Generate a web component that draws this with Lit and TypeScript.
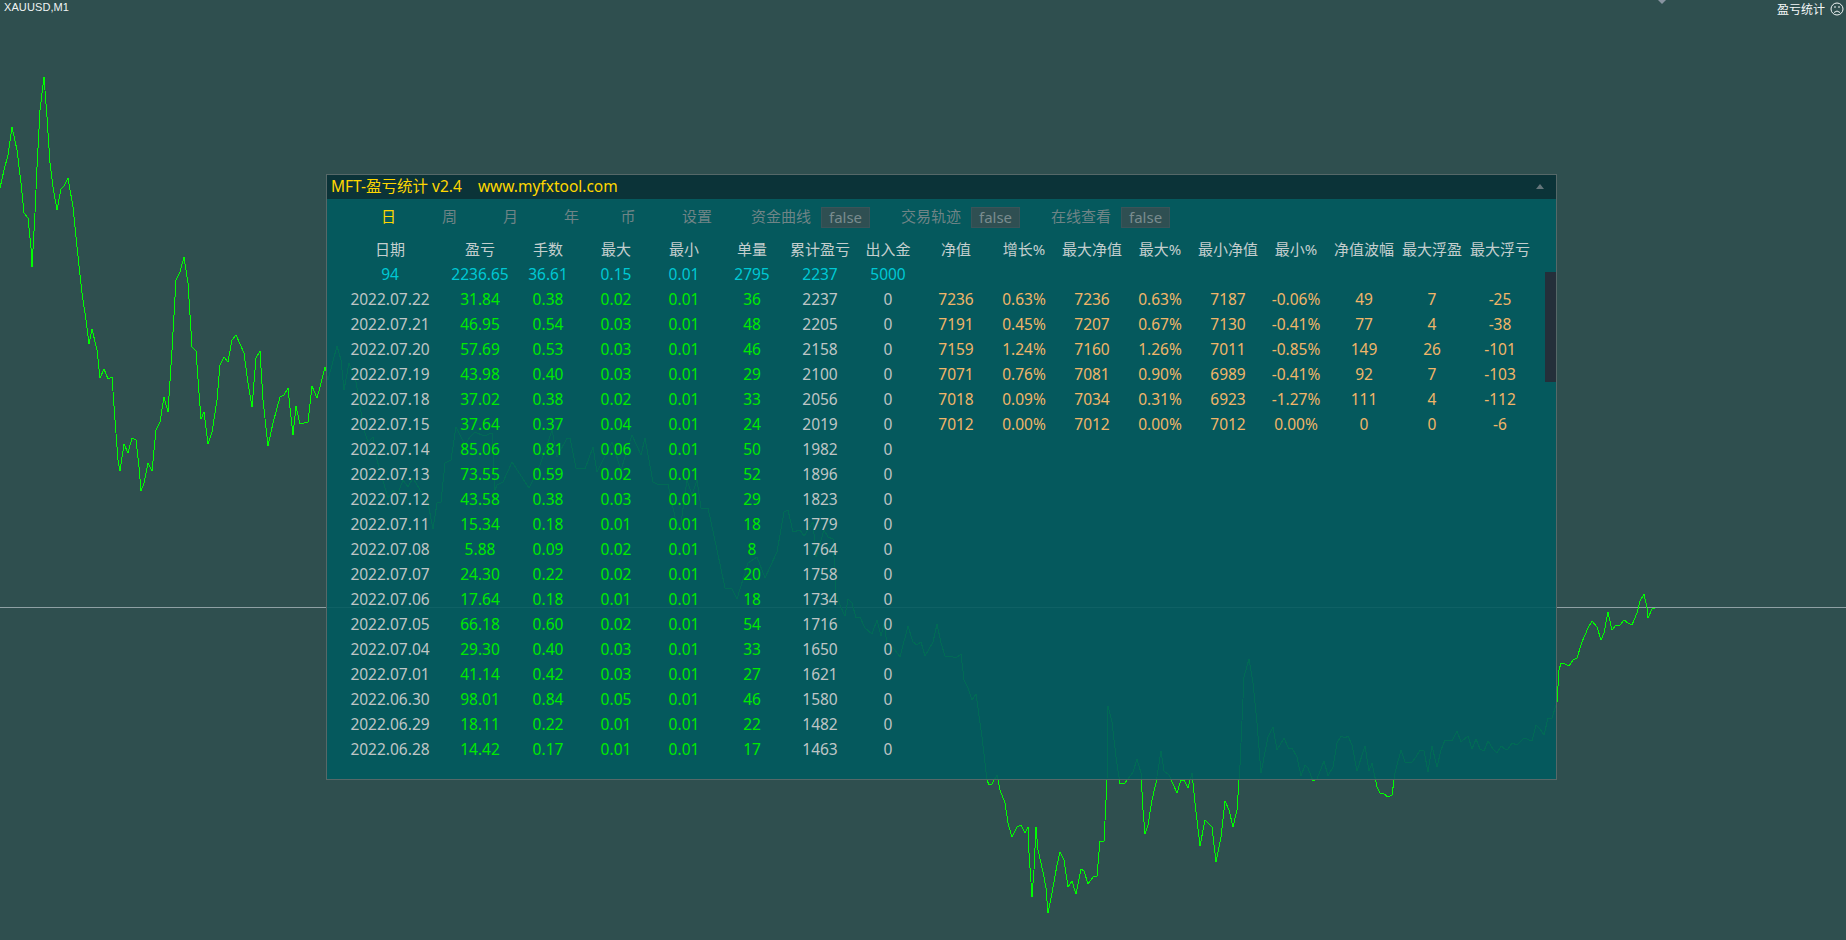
import { LitElement, html, css, svg } from "lit";
import { customElement } from "lit/decorators.js";

const LINE = "0,188 4,170 8,155 12,127 17,150 21,183 24,213 28,218 31,248 32,267 35,213 37,167 40,110 44,77 47,117 50,163 53,187 57,210 61,189 64,186 68,178 73,207 77,247 82,293 86,320 89,344 92,329 97,350 100,378 104,369 108,379 112,377 115,420 118,460 120,471 124,444 128,453 132,438 136,440 139,467 141,491 144,483 148,463 152,471 156,430 160,422 164,397 168,412 172,350 176,280 180,272 184,257 188,283 192,347 196,351 199,393 201,419 204,412 208,444 212,432 217,400 220,365 224,357 228,362 232,340 236,335 244,353 248,383 252,407 256,358 260,351 263,400 268,446 273,423 280,397 284,395 288,388 291,417 293,435 296,406 300,424 308,422 312,386 317,398 320,387 325,367 328,380 337,346 341,360 344,390 349,363 356,382 360,407 365,433 368,442 373,437 377,460 388,498 393,490 397,496 403,480 408,487 413,478 420,490 428,503 433,529 437,503 441,502 445,463 451,460 456,427 465,445 470,437 475,432 484,436 492,433 495,490 497,485 503,482 512,462 529,488 540,465 552,430 557,457 567,438 570,438 576,468 585,469 593,447 597,472 612,442 621,470 632,435 641,455 645,438 653,482 659,485 668,484 675,517 680,530 687,480 692,495 697,480 701,508 708,508 717,550 725,588 732,589 737,599 748,563 757,557 765,578 777,552 784,512 788,510 793,532 800,530 804,536 813,522 816,557 824,530 828,537 833,539 836,593 840,605 845,616 848,599 852,603 856,618 860,617 865,628 872,634 877,620 881,636 884,624 887,643 895,650 900,657 908,626 913,642 917,645 921,642 925,656 933,642 937,624 941,643 945,656 950,656 956,658 961,654 964,680 968,688 972,700 976,694 982,737 987,780 989,785 992,784 997,775 1000,790 1005,803 1008,823 1012,837 1017,827 1021,825 1025,833 1028,827 1029,853 1032,897 1034,870 1036,827 1038,850 1043,872 1046,888 1048,913 1052,893 1057,865 1060,852 1064,860 1068,887 1072,881 1076,894 1081,869 1084,871 1088,884 1093,877 1097,876 1100,841 1104,841 1107,780 1108,706 1112,722 1116,757 1120,784 1125,783 1133,772 1137,759 1141,773 1143,810 1145,834 1148,825 1152,800 1156,783 1161,751 1164,771 1169,775 1177,793 1181,780 1184,780 1188,788 1192,773 1195,803 1200,846 1205,820 1212,827 1216,862 1221,837 1225,801 1229,810 1233,827 1237,810 1240,765 1244,677 1249,659 1253,683 1257,723 1261,773 1268,737 1273,727 1277,750 1284,738 1289,749 1292,748 1297,757 1301,776 1305,765 1308,768 1313,781 1317,779 1324,761 1328,776 1333,767 1337,743 1341,736 1345,738 1348,736 1352,745 1357,771 1365,746 1369,771 1372,763 1377,787 1380,793 1384,794 1388,797 1392,795 1395,773 1401,750 1405,762 1412,762 1416,757 1420,750 1424,751 1428,772 1432,746 1437,767 1441,750 1445,740 1452,741 1457,731 1461,742 1468,736 1472,749 1476,739 1480,749 1484,751 1488,741 1493,749 1497,753 1501,746 1505,749 1508,749 1512,743 1517,745 1524,738 1532,741 1536,725 1540,729 1544,735 1548,718 1552,718 1557,702 1559,670 1561,663 1565,664 1569,666 1573,660 1577,658 1582,642 1588,628 1592,621 1597,627 1601,640 1604,633 1608,612 1612,630 1616,625 1620,625 1624,620 1628,623 1632,625 1637,613 1640,601 1644,594 1647,608 1648,618 1652,609 1655,608";

const HEAD = ["日期","盈亏","手数","最大","最小","单量","累计盈亏","出入金","净值","增长%","最大净值","最大%","最小净值","最小%","净值波幅","最大浮盈","最大浮亏"];
const SUMMARY = ["94","2236.65","36.61","0.15","0.01","2795","2237","5000"];
const ROWS: string[][] = [
  "2022.07.22 31.84 0.38 0.02 0.01 36 2237 0 7236 0.63% 7236 0.63% 7187 -0.06% 49 7 -25",
  "2022.07.21 46.95 0.54 0.03 0.01 48 2205 0 7191 0.45% 7207 0.67% 7130 -0.41% 77 4 -38",
  "2022.07.20 57.69 0.53 0.03 0.01 46 2158 0 7159 1.24% 7160 1.26% 7011 -0.85% 149 26 -101",
  "2022.07.19 43.98 0.40 0.03 0.01 29 2100 0 7071 0.76% 7081 0.90% 6989 -0.41% 92 7 -103",
  "2022.07.18 37.02 0.38 0.02 0.01 33 2056 0 7018 0.09% 7034 0.31% 6923 -1.27% 111 4 -112",
  "2022.07.15 37.64 0.37 0.04 0.01 24 2019 0 7012 0.00% 7012 0.00% 7012 0.00% 0 0 -6",
  "2022.07.14 85.06 0.81 0.06 0.01 50 1982 0",
  "2022.07.13 73.55 0.59 0.02 0.01 52 1896 0",
  "2022.07.12 43.58 0.38 0.03 0.01 29 1823 0",
  "2022.07.11 15.34 0.18 0.01 0.01 18 1779 0",
  "2022.07.08 5.88 0.09 0.02 0.01 8 1764 0",
  "2022.07.07 24.30 0.22 0.02 0.01 20 1758 0",
  "2022.07.06 17.64 0.18 0.01 0.01 18 1734 0",
  "2022.07.05 66.18 0.60 0.02 0.01 54 1716 0",
  "2022.07.04 29.30 0.40 0.03 0.01 33 1650 0",
  "2022.07.01 41.14 0.42 0.03 0.01 27 1621 0",
  "2022.06.30 98.01 0.84 0.05 0.01 46 1580 0",
  "2022.06.29 18.11 0.22 0.01 0.01 22 1482 0",
  "2022.06.28 14.42 0.17 0.01 0.01 17 1463 0",
].map((r) => r.split(" "));

const cellClass = (i: number) => (i === 0 || i === 6 || i === 7 ? "silver" : i < 6 ? "green" : "orange");

@customElement("app-root")
export class AppRoot extends LitElement {
  static styles = css`
    :host {
      display: block;
      position: relative;
      width: 100%;
      height: 100vh;
      overflow: hidden;
      background: #2f4f4f;
      font-family: "Noto Sans", "Noto Sans CJK SC", sans-serif;
    }
    .chart { position: absolute; inset: 0; width: 100%; height: 100%; }
    .symbol {
      position: absolute; left: 4px; top: 0;
      font: 11px/14px "Liberation Sans", sans-serif; letter-spacing: 0.1px; color: #f0f4f4;
    }
    .marker {
      position: absolute; left: 1658px; top: 0; width: 0; height: 0;
      border-left: 4px solid transparent; border-right: 4px solid transparent;
      border-top: 4px solid #8894a0;
    }
    .indicator {
      position: absolute; right: 2px; top: 1px; display: flex; align-items: center; gap: 5px;
      font: 12px/16px "Noto Sans CJK SC", sans-serif; color: #f4f8f8;
    }
    .indicator svg { display: block; width: 14px; height: 14px; }
    .panel {
      position: absolute; left: 326px; top: 174px; width: 1231px; height: 606px;
      box-sizing: border-box; border: 1px solid #566868;
      display: flex; flex-direction: column;
      font-size: 15.5px;
    }
    .title {
      flex: none; height: 24px; box-sizing: border-box; padding: 0 0 1px 4px;
      display: flex; align-items: center; gap: 16px;
      background: #0b3338; color: #ffd700; line-height: 23px;
    }
    .collapse {
      margin-left: auto; margin-right: 12px; width: 0; height: 0;
      border-left: 4px solid transparent; border-right: 4px solid transparent;
      border-bottom: 5px solid #64757a;
    }
    .body {
      flex: 1; position: relative; background: rgba(1, 90, 94, 0.9);
    }
    .tabs {
      display: flex; align-items: center; height: 21px; padding: 8px 0 0 31px;
      color: #6f8486; font-size: 15px;
    }
    .tab { text-align: center; width: 61px; line-height: 19px; height: 21px; }
    .tab.on { color: #ffd700; }
    .tab.narrow { width: 52px; }
    .tab.wide { width: 86px; margin-right: 11px; }
    .toggles { display: flex; gap: 31px; }
    .toggle { display: flex; align-items: flex-start; gap: 10px; line-height: 19px; }
    .val {
      box-sizing: border-box; width: 49px; height: 21px; line-height: 18px;
      text-align: center; background: #2f4f52; border: 1px solid #3a5459;
      color: #7a8c8e; font-size: 15px;
    }
    .table { margin: 9px 0 0 7px; }
    .row {
      display: grid; grid-template-columns: 112px repeat(16, 68px);
      height: 25px; line-height: 25px; text-align: center;
    }
    .head { color: #c4cece; font-size: 15px; }
    .summary { color: #00c8d4; }
    .silver { color: #bfc5c5; }
    .green { color: #00ea00; }
    .orange { color: #f0b568; }
    .scroll {
      position: absolute; right: 0; top: 73px; width: 11px; height: 110px;
      background: #242f3a;
    }
  `;

  render() {
    return html`
      <svg class="chart" viewBox="0 0 1846 940" shape-rendering="crispEdges">
        ${svg`<line x1="0" y1="607.5" x2="1846" y2="607.5" stroke="#8fa0a4" stroke-width="1"></line>
        <polyline points=${LINE} fill="none" stroke="#00ff00" stroke-width="1"></polyline>`}
      </svg>
      <div class="symbol">XAUUSD,M1</div>
      <div class="marker"></div>
      <div class="indicator">
        <span>盈亏统计</span>
        <svg viewBox="0 0 14 14" fill="none" stroke="#f0f4f4" stroke-width="1">
          <circle cx="7" cy="7" r="6"></circle>
          <path d="M4 5h2M8 5h2M4 10.5q3-3 6 0"></path>
        </svg>
      </div>
      <div class="panel">
        <div class="title">
          <span>MFT-盈亏统计 v2.4</span><span>www.myfxtool.com</span>
          <span class="collapse"></span>
        </div>
        <div class="body">
          <div class="tabs">
            <div class="tab on">日</div>
            <div class="tab">周</div>
            <div class="tab">月</div>
            <div class="tab">年</div>
            <div class="tab narrow">币</div>
            <div class="tab wide">设置</div>
            <div class="toggles">
              ${["资金曲线", "交易轨迹", "在线查看"].map(
                (t) => html`<div class="toggle"><span>${t}</span><span class="val">false</span></div>`
              )}
            </div>
          </div>
          <div class="table">
            <div class="row head">${HEAD.map((h) => html`<div>${h}</div>`)}</div>
            <div class="row summary">${SUMMARY.map((s) => html`<div>${s}</div>`)}</div>
            ${ROWS.map(
              (r) => html`<div class="row">${r.map((c, i) => html`<div class=${cellClass(i)}>${c}</div>`)}</div>`
            )}
          </div>
          <div class="scroll"></div>
        </div>
      </div>
    `;
  }
}
